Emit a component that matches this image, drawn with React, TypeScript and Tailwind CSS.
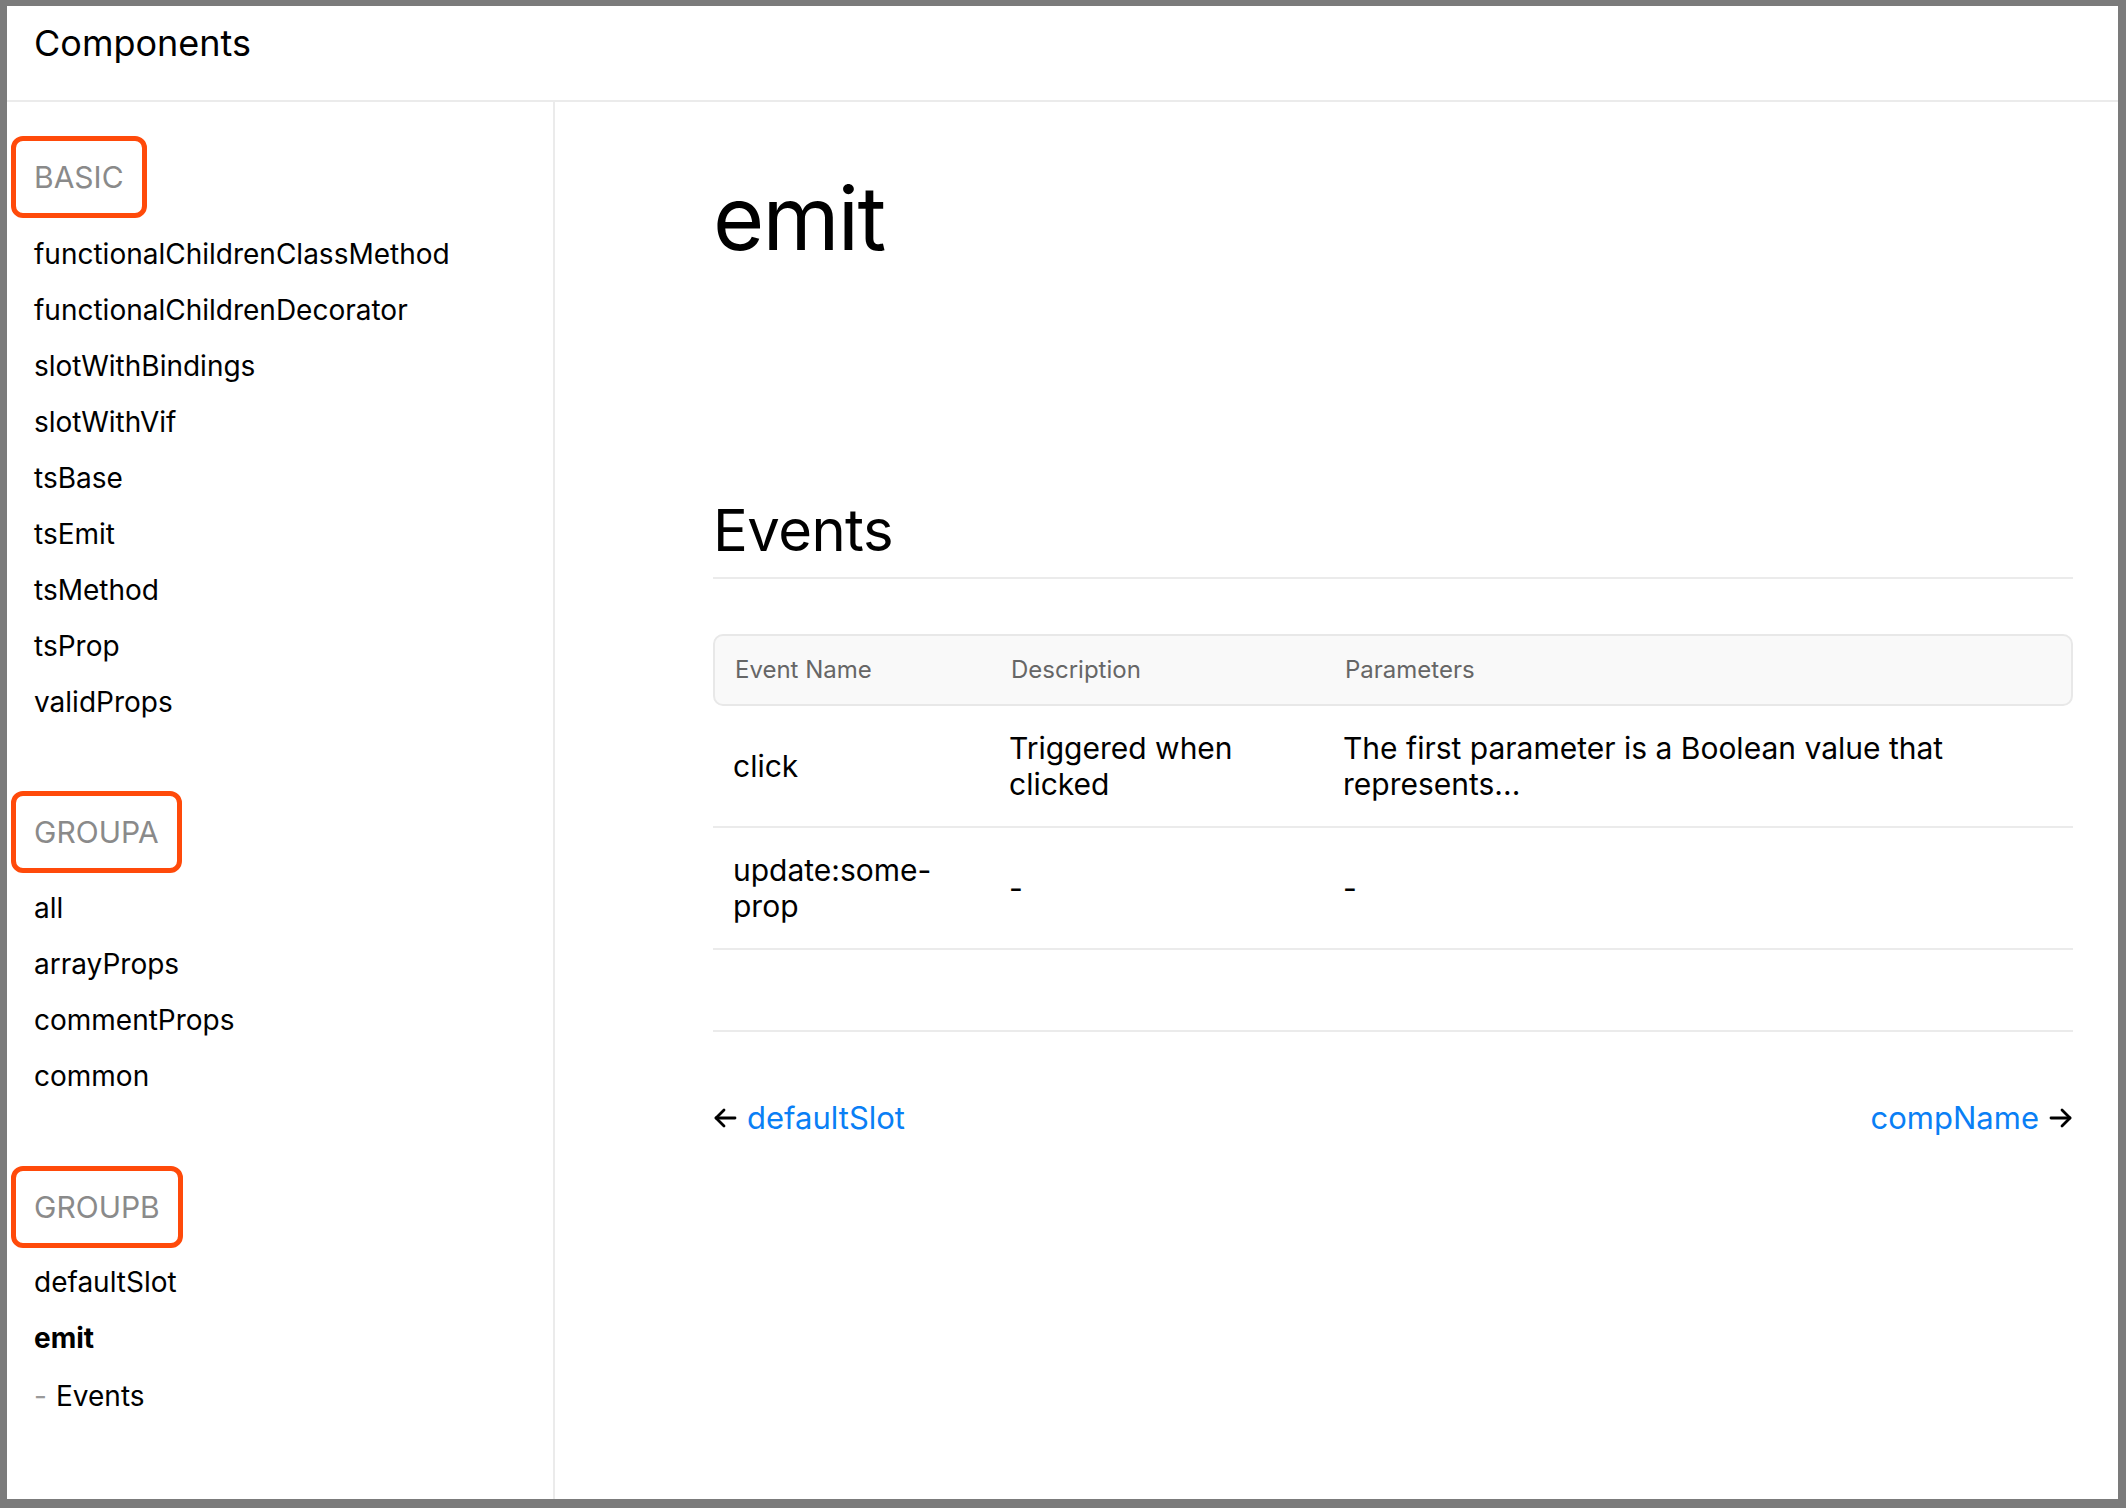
import React from "react";

const basic = [
  "functionalChildrenClassMethod",
  "functionalChildrenDecorator",
  "slotWithBindings",
  "slotWithVif",
  "tsBase",
  "tsEmit",
  "tsMethod",
  "tsProp",
  "validProps",
];

const groupA = ["all", "arrayProps", "commentProps", "common"];

const events = [
  {
    name: "click",
    desc: "Triggered when clicked",
    params: "The first parameter is a Boolean value that represents...",
  },
  { name: "update:some-prop", desc: "-", params: "-" },
];

function GroupLabel({ children, className = "" }: { children: React.ReactNode; className?: string }) {
  return (
    <div className={`-ml-[23px] w-fit rounded-[12px] border-[5px] border-[#ff4a0a] px-[18px] py-[18px] text-[30px] leading-[36px] text-[#8a8a8a] ${className}`}>
      {children}
    </div>
  );
}

function NavItem({ children, bold = false }: { children: React.ReactNode; bold?: boolean }) {
  return (
    <div className={`text-[28px] leading-[56px] text-black ${bold ? "font-bold" : ""}`}>{children}</div>
  );
}

function Arrow({ dir }: { dir: "left" | "right" }) {
  return (
    <svg width="24" height="22" viewBox="0 0 24 22" fill="none" stroke="black" strokeWidth="2.8" strokeLinecap="round" strokeLinejoin="round">
      {dir === "left" ? (
        <>
          <path d="M22 11H3" />
          <path d="M11 3L3 11l8 8" />
        </>
      ) : (
        <>
          <path d="M2 11h19" />
          <path d="M13 3l8 8-8 8" />
        </>
      )}
    </svg>
  );
}

export default function App() {
  return (
    <div className="h-[1508px] w-[2126px] bg-[#7b7b7b] pt-[6px] pl-[7px] pr-[8px] pb-[9px]">
      <div className="flex h-full flex-col bg-white font-['Inter',_'Liberation_Sans',_sans-serif]">
        <header className="flex h-[96px] shrink-0 items-center border-b-2 border-[#ebebeb] pl-[27px] pb-[21px] text-[36px] text-black">
          Components
        </header>

        <div className="flex flex-1">
          <aside className="w-[548px] shrink-0 border-r-2 border-[#ebebeb] pl-[27px] pt-[34px]">
            <GroupLabel>BASIC</GroupLabel>
            <div className="mt-[8px]">
              {basic.map((b) => (
                <NavItem key={b}>{b}</NavItem>
              ))}
            </div>

            <GroupLabel className="mt-[61px]">GROUPA</GroupLabel>
            <div className="mt-[7px]">
              {groupA.map((b) => (
                <NavItem key={b}>{b}</NavItem>
              ))}
            </div>

            <GroupLabel className="mt-[62px]">GROUPB</GroupLabel>
            <div className="mt-[6px]">
              <NavItem>defaultSlot</NavItem>
              <NavItem bold>emit</NavItem>
              <div className="mt-[2px] flex items-center text-[28px] leading-[56px]">
                <span className="w-[22px] text-[#9a9a9a]">-</span>
                <span className="text-black">Events</span>
              </div>
            </div>
          </aside>

          <main className="flex-1 pl-[158px] pr-[45px]">
            <h1 className="mt-[72px] text-[88px] leading-none tracking-[-0.02em] text-black">emit</h1>

            <h2 className="mt-[239px] border-b-2 border-[#ebebeb] pb-[18px] text-[58px] leading-none tracking-[-0.01em] text-black">
              Events
            </h2>

            <div className="mt-[55px]">
              <div className="grid h-[72px] grid-cols-[277px_334px_1fr] items-center rounded-[10px] border-2 border-[#e8e8e8] bg-[#f9f9f9] text-[24px] text-[#666666]">
                <div className="pl-[20px]">Event Name</div>
                <div className="pl-[19px]">Description</div>
                <div className="pl-[19px]">Parameters</div>
              </div>
              {events.map((e) => (
                <div
                  key={e.name}
                  className="grid grid-cols-[277px_334px_1fr] items-center border-b-2 border-[#ebebeb] py-[24px] text-[30px] leading-[36px] text-black"
                >
                  <div className="px-[20px]">{e.name}</div>
                  <div className="px-[19px]">{e.desc}</div>
                  <div className="px-[19px]">{e.params}</div>
                </div>
              ))}
            </div>

            <div className="mt-[80px] border-t-2 border-[#ebebeb]" />

            <div className="mt-[66px] flex items-center justify-between text-[31px] leading-[40px]">
              <div className="flex items-center gap-[10px]">
                <Arrow dir="left" />
                <span className="text-[#0a7ff5]">defaultSlot</span>
              </div>
              <div className="flex items-center gap-[10px]">
                <span className="text-[#0a7ff5]">compName</span>
                <Arrow dir="right" />
              </div>
            </div>
          </main>
        </div>
      </div>
    </div>
  );
}
